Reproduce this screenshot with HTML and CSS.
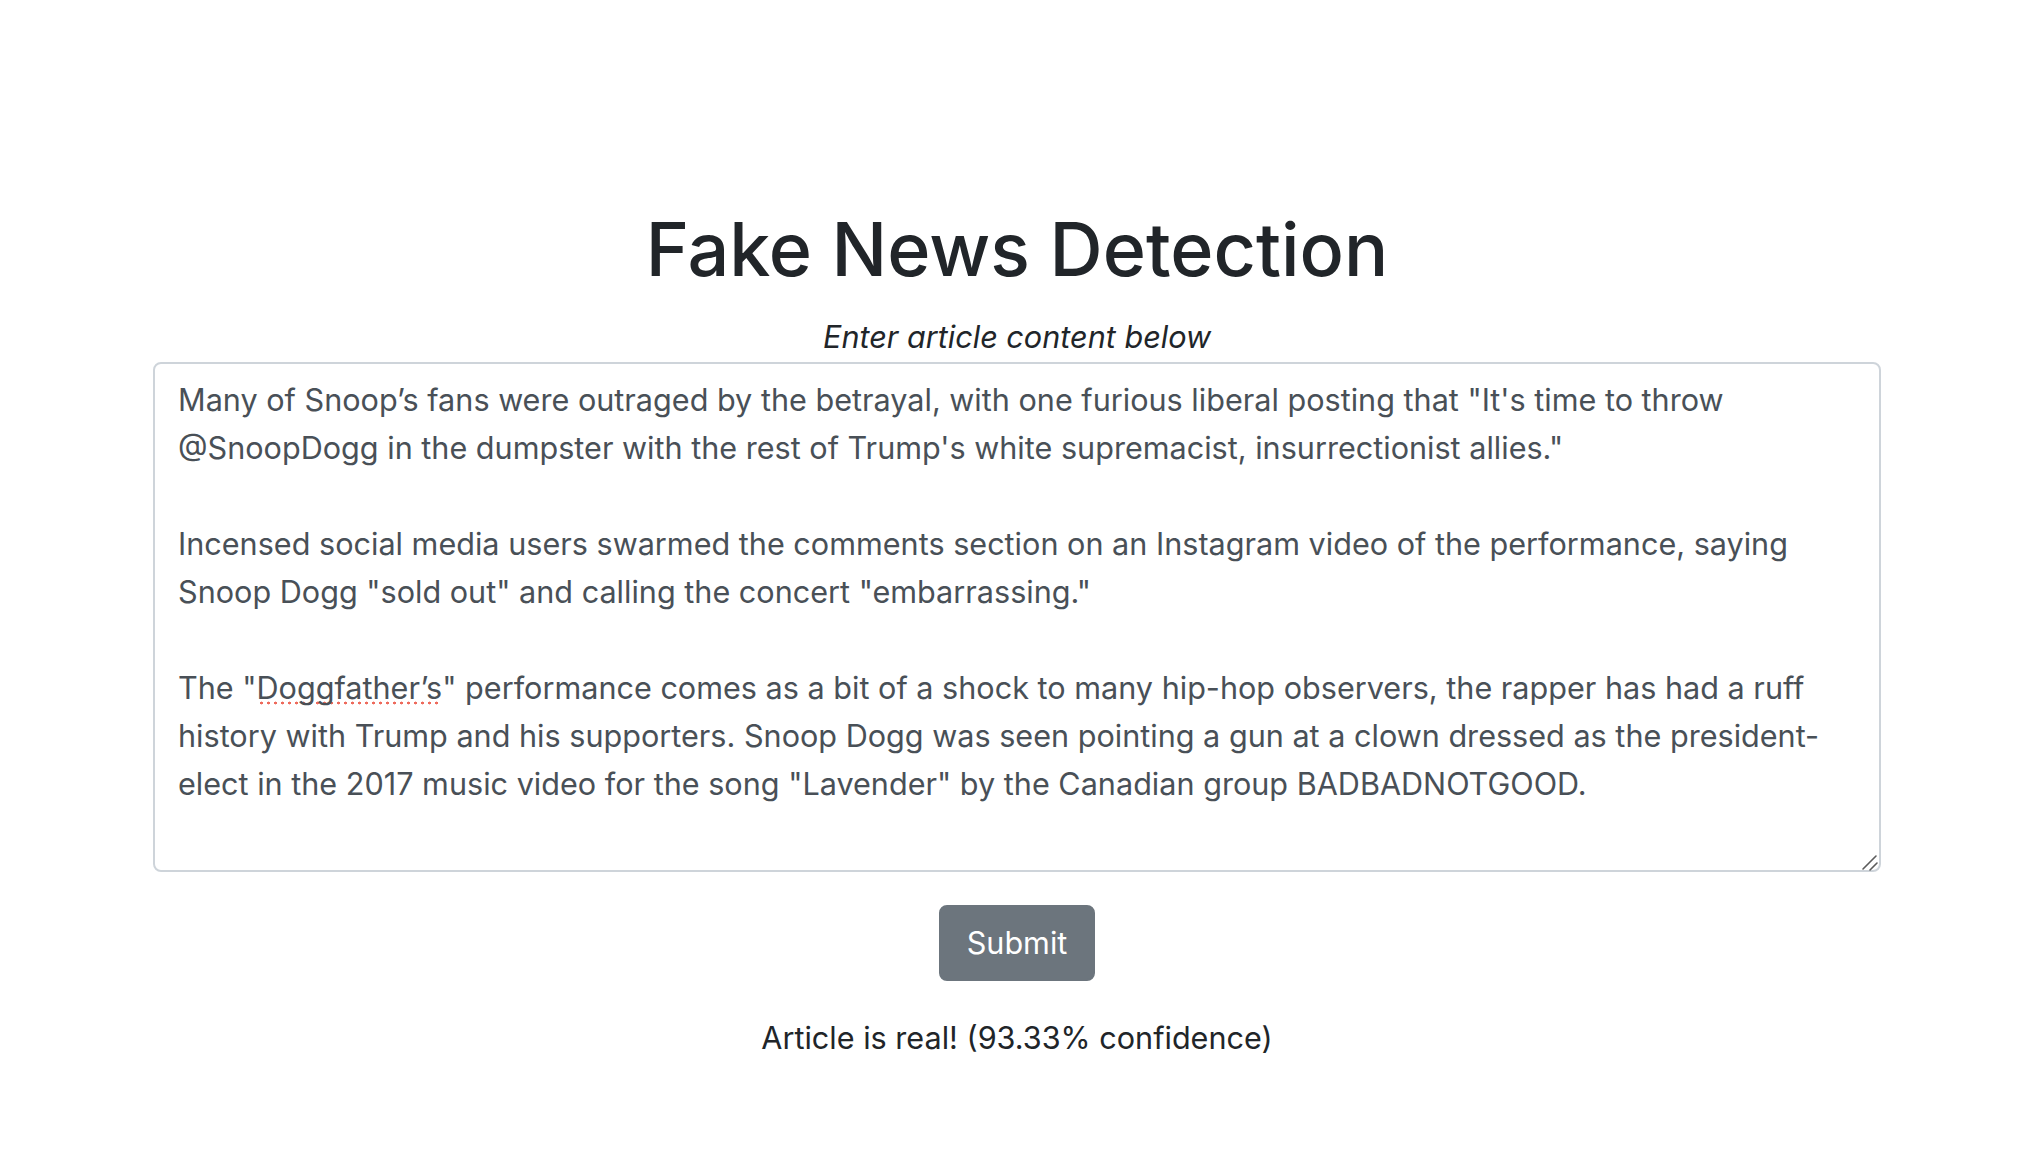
FILE: index.html
```html
<!DOCTYPE html>
<html lang="en">
<head>
<meta charset="utf-8">
<title>Fake News Detection</title>
<link rel="stylesheet" href="styles.css">
</head>
<body>
<main class="page">
  <h1 class="title">Fake News Detection</h1>
  <p class="subtitle">Enter article content below</p>
  <div class="article-wrap">
    <div class="article" role="textbox" aria-multiline="true">Many of Snoop’s fans were outraged by the betrayal, with one furious liberal posting that "It's time to throw
@SnoopDogg in the dumpster with the rest of Trump's white supremacist, insurrectionist allies."

Incensed social media users swarmed the comments section on an Instagram video of the performance, saying
Snoop Dogg "sold out" and calling the concert "embarrassing."

The "<span class="misspelled">Doggfather’s</span>" performance comes as a bit of a shock to many hip-hop observers, the rapper has had a ruff
history with Trump and his supporters. Snoop Dogg was seen pointing a gun at a clown dressed as the president-
elect in the 2017 music video for the song "Lavender" by the Canadian group BADBADNOTGOOD.</div>
    <svg class="grip" width="20" height="20" viewBox="0 0 20 20" aria-hidden="true">
      <path d="M4 17 L17 4 M11 18 L18 11" stroke="#5c5c5c" stroke-width="1.6" stroke-linecap="round" fill="none"/>
    </svg>
  </div>
  <button class="submit" type="button">Submit</button>
  <p class="result">Article is real! (93.33% confidence)</p>
</main>
</body>
</html>
```

FILE: styles.css
```css
html, body {
  margin: 0;
  padding: 0;
  background: #ffffff;
}

body {
  font-family: Inter, "Liberation Sans", sans-serif;
  color: #212529;
}

.page {
  display: flex;
  flex-direction: column;
  align-items: center;
  padding-top: 205px;
}

.title {
  margin: 0 0 19px;
  font-size: 73.6px;
  line-height: 90px;
  font-weight: 500;
  color: #212529;
}

.subtitle {
  margin: 0;
  font-size: 30.6px;
  line-height: 46px;
  font-style: italic;
  color: #212529;
}

.article-wrap {
  position: relative;
  width: 1728px;
  margin-top: 2px;
}

.article {
  box-sizing: border-box;
  width: 100%;
  height: 510px;
  padding: 12px 23px;
  border: 2px solid #ced4da;
  border-radius: 8px;
  font-size: 30.6px;
  line-height: 48px;
  color: #495057;
  white-space: pre;
  overflow: hidden;
  background: #ffffff;
}

.grip {
  position: absolute;
  right: 2px;
  bottom: 0;
  display: block;
}

.misspelled {
  background-image: radial-gradient(circle, #ee6a5c 1.2px, rgba(238, 106, 92, 0) 1.7px);
  background-size: 7px 4px;
  background-repeat: repeat-x;
  background-position: 1px calc(100% - 1px);
}

.submit {
  box-sizing: border-box;
  margin-top: 33px;
  height: 76px;
  padding: 0 26px;
  border: 2px solid #6c757d;
  border-radius: 8px;
  background: #6c757d;
  color: #ffffff;
  font-family: Inter, "Liberation Sans", sans-serif;
  font-size: 30.6px;
  line-height: 48px;
  cursor: pointer;
}

.result {
  margin: 33px 0 0;
  font-size: 30.6px;
  line-height: 48px;
  color: #212529;
}
```
